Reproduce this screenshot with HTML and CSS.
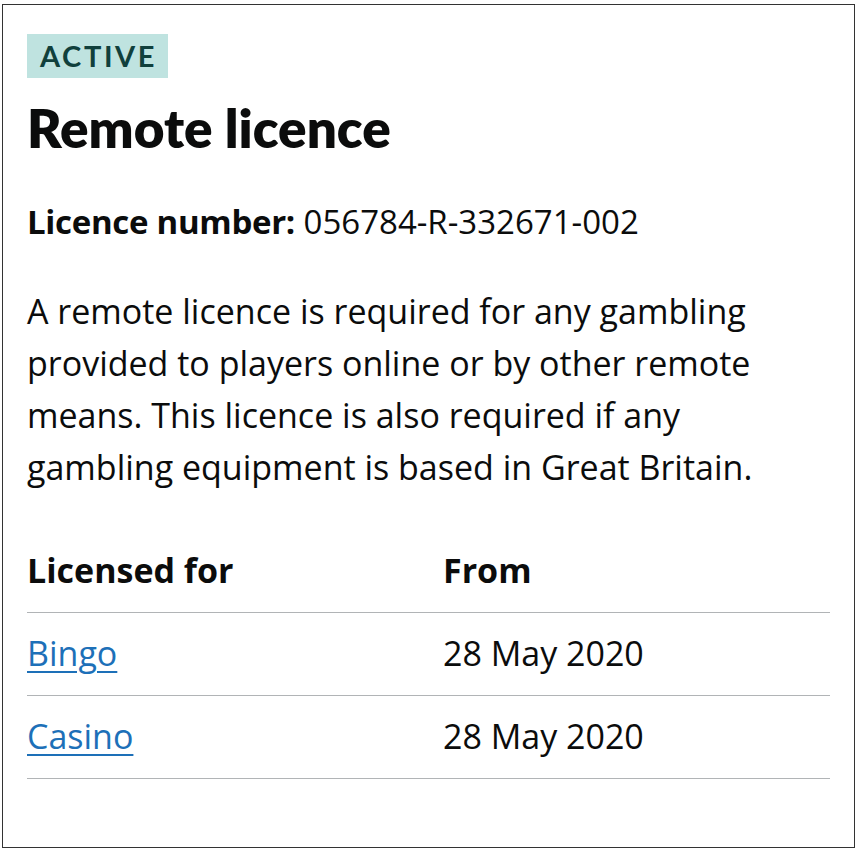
FILE: index.html
```html
<!DOCTYPE html>
<html lang="en">
<head>
<meta charset="utf-8">
<title>Remote licence</title>
<link rel="stylesheet" href="styles.css">
</head>
<body>
<div class="card">
  <span class="tag">ACTIVE</span>
  <h1 class="title">Remote licence</h1>
  <p class="number"><strong>Licence number:</strong> 056784-R-332671-002</p>
  <p class="desc">A remote licence is required for any gambling provided to players online or by other remote means. This licence is also required if any gambling equipment is based in Great Britain.</p>
  <table class="table">
    <thead>
      <tr><th>Licensed for</th><th>From</th></tr>
    </thead>
    <tbody>
      <tr><td><a href="#">Bingo</a></td><td>28 May 2020</td></tr>
      <tr><td><a href="#">Casino</a></td><td>28 May 2020</td></tr>
    </tbody>
  </table>
</div>
</body>
</html>
```
FILE: styles.css
```css
html, body { margin: 0; padding: 0; background: #fff; }
body { font-family: "Open Sans", "Noto Sans", sans-serif; color: #0b0c0c; }
.card {
  box-sizing: border-box;
  margin: 4px 0 0 2px;
  width: 853px;
  height: 844px;
  border: 1px solid #333;
  padding: 29px 24px 0 24px;
}
.tag {
  display: inline-block;
  background: #bfe3e0;
  color: #10403c;
  font-family: "Lato", sans-serif;
  font-size: 29px;
  font-weight: 700;
  letter-spacing: 2.6px;
  line-height: 44px;
  padding: 0 11px 0 13px;
}
.title {
  font-family: "Lato", sans-serif;
  font-size: 53px;
  font-weight: 800;
  margin: 19px 0 0;
  line-height: 62px;
}
.number { font-size: 33px; margin: 41px 0 0; line-height: 44px; }
.number strong { font-weight: 700; letter-spacing: -0.3px; }
.desc { font-size: 34px; line-height: 52px; margin: 41px 0 0; max-width: 800px; }
.table { width: 100%; border-collapse: collapse; margin-top: 38px; font-size: 34px; }
.table th, .table td { text-align: left; padding: 0; border-bottom: 1px solid #b1b4b6; vertical-align: middle; }
.table td { height: 83px; box-sizing: border-box; padding-bottom: 2px; }
.table th { font-weight: 700; height: 81px; vertical-align: top; padding-top: 16px; box-sizing: border-box; }
.table th:first-child, .table td:first-child { width: 416px; }
.table a { color: #1d70b8; text-decoration: underline; text-underline-offset: 5px; text-decoration-thickness: 2px; }
```
